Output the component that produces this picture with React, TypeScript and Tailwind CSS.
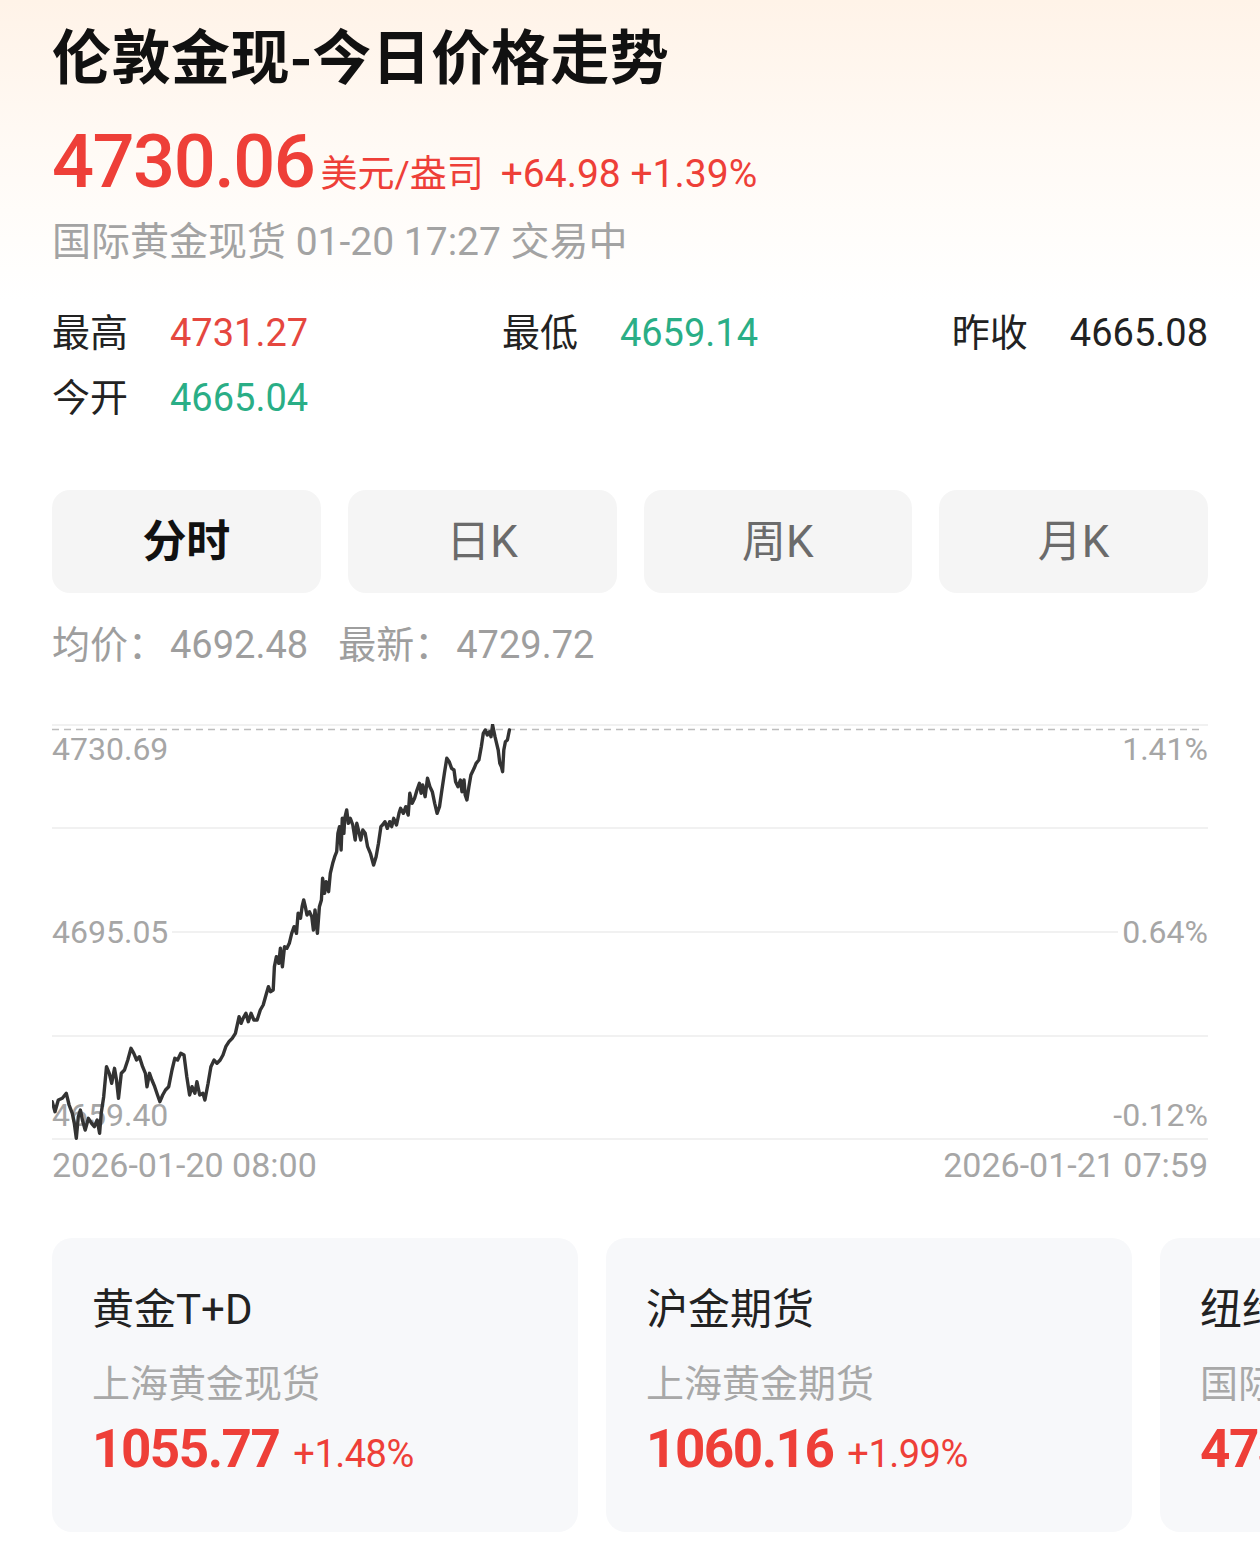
import React from "react";

const RAW: [number, number][] = [
  [130,1205],[137,1235],[145,1200],[155,1195],[165,1180],[172,1215],[180,1240],[185,1270],[190,1315],[195,1250],
  [200,1230],[205,1260],[212,1290],[220,1255],[228,1270],[235,1280],[242,1260],[248,1300],[252,1240],[258,1190],
  [265,1100],[272,1120],[278,1150],[285,1105],[290,1140],[295,1195],[302,1120],[310,1110],[318,1080],[326,1045],
  [333,1060],[340,1080],[347,1070],[355,1100],[362,1120],[366,1160],[372,1120],[378,1140],[385,1160],[392,1185],
  [398,1205],[405,1185],[412,1170],[420,1160],[428,1110],[435,1075],[442,1080],[450,1060],[458,1065],[465,1130],
  [472,1185],[478,1160],[485,1180],[490,1145],[497,1185],[505,1180],[510,1200],[518,1150],[525,1100],[533,1080],
  [540,1090],[548,1080],[555,1065],[562,1040],[570,1025],[578,1015],[586,1000],[595,950],[600,970],[605,955],
  [612,940],[618,965],[625,940],[632,960],[640,960],[648,930],[655,915],[662,885],[668,860],[673,875],
  [680,870],[683,800],[688,770],[694,790],[698,745],[703,800],[708,740],[714,745],[720,730],[726,700],
  [732,680],[738,700],[742,640],[748,655],[752,620],[756,600],[760,620],[764,645],[770,635],[776,650],
  [780,690],[784,630],[790,700],[795,620],[800,600],[803,535],[808,580],[812,545],[818,575],[822,520],
  [828,490],[833,470],[838,455],[841,400],[845,380],[849,450],[852,355],[856,400],[858,355],[863,330],
  [867,370],[872,355],[878,375],[884,420],[888,370],[892,390],[898,420],[903,390],[909,400],[915,440],
  [922,460],[930,495],[936,470],[942,430],[948,380],[952,375],[958,365],[964,385],[970,365],[975,380],
  [980,355],[987,375],[993,340],[997,325],[1004,340],[1010,320],[1016,345],[1020,280],[1026,310],[1032,295],
  [1038,270],[1044,250],[1048,280],[1052,255],[1058,290],[1064,235],[1070,260],[1076,275],[1082,310],[1088,340],
  [1094,320],[1100,270],[1106,220],[1112,175],[1118,185],[1124,205],[1130,210],[1134,245],[1140,260],[1146,240],
  [1150,275],[1155,240],[1158,285],[1162,300],[1167,260],[1172,225],[1180,205],[1185,190],[1192,180],[1198,140],
  [1203,100],[1208,90],[1213,105],[1218,95],[1222,110],[1226,75],[1232,110],[1236,130],[1240,150],[1244,190],
  [1248,200],[1251,215],[1254,150],[1258,125],[1263,120],[1268,90],
];

const pathD = RAW.map(([zx, zy], i) => {
  const x = zx / 2.489 - 52;
  const y = zy / 3 - 24;
  return (i ? "L" : "M") + x.toFixed(1) + " " + y.toFixed(1);
}).join(" ");

const FONT = "font-['Roboto','Noto_Sans_CJK_SC',sans-serif]";

function Stat({ label, value, color }: { label: string; value: string; color: string }) {
  return (
    <div className="flex items-center h-[50px] leading-[50px]">
      <span className="text-[38px] text-[#222]">{label}</span>
      <span className={`ml-[42px] text-[38px] ${color}`}>{value}</span>
    </div>
  );
}

function Tab({ label, active }: { label: string; active?: boolean }) {
  return (
    <div className="flex-1 h-[103px] rounded-[18px] bg-[#f5f5f5] flex items-center justify-center">
      <span className={active ? "text-[44px] font-bold text-[#111]" : "text-[44px] text-[#6b6b6b]"}>{label}</span>
    </div>
  );
}

function Card({ title, sub, value, pct }: { title: string; sub: string; value: string; pct: string }) {
  return (
    <div className="shrink-0 w-[526px] h-[294px] rounded-[20px] bg-[#f7f8fa] pl-[40px] pt-[45px]">
      <div className="text-[42px] leading-[54px] text-[#222] whitespace-nowrap">{title}</div>
      <div className="mt-[21px] text-[38px] leading-[52px] text-[#a8a8a8] whitespace-nowrap">{sub}</div>
      <div className="mt-[8px] flex items-baseline whitespace-nowrap leading-[62px]">
        <span className="text-[53px] font-bold text-[#ee3f38] tracking-[-1.5px]">{value}</span>
        <span className="ml-[14px] text-[38px] text-[#ee3f38] tracking-[-0.5px]">{pct}</span>
      </div>
    </div>
  );
}

export default function App() {
  return (
    <div className={`w-[1260px] h-[1566px] overflow-hidden bg-white ${FONT}`}>
      <div className="bg-gradient-to-b from-[#fff3e8] via-[#fffaf5] to-white px-[52px] pt-[19px] pb-[36px]">
        <div className="text-[59px] leading-[70px] font-bold text-[#111] font-['Noto_Sans_CJK_SC',sans-serif] whitespace-nowrap tracking-[0.5px]">
          伦敦金现-今日价格走势
        </div>
        <div className="mt-[33px] h-[80px] flex items-baseline whitespace-nowrap text-[#ee3f38]">
          <span className="text-[74px] leading-[80px] font-medium tracking-[-1.5px]">4730.06</span>
          <span className="ml-[6px] text-[37px]">美元/盎司</span>
          <span className="ml-[17px] text-[39px]">+64.98 +1.39%</span>
        </div>
        <div className="mt-[18px] h-[44px] text-[39px] leading-[44px] text-[#a3a3a3] whitespace-nowrap">
          国际黄金现货 01-20 17:27 交易中
        </div>
      </div>

      <div className="px-[52px]">
        <div className="grid grid-cols-3 mt-[8px]">
          <div className="justify-self-start"><Stat label="最高" value="4731.27" color="text-[#e5473f]" /></div>
          <div className="justify-self-center"><Stat label="最低" value="4659.14" color="text-[#2aae86]" /></div>
          <div className="justify-self-end"><Stat label="昨收" value="4665.08" color="text-[#222]" /></div>
        </div>
        <div className="mt-[15px]">
          <Stat label="今开" value="4665.04" color="text-[#2aae86]" />
        </div>

        <div className="mt-[67px] flex gap-[27px]">
          <Tab label="分时" active />
          <Tab label="日K" />
          <Tab label="周K" />
          <Tab label="月K" />
        </div>

        <div className="mt-[29px] h-[46px] leading-[46px] text-[38px] text-[#9e9e9e] whitespace-nowrap flex">
          <span>均价：</span>
          <span className="ml-[4px]">4692.48</span>
          <span className="ml-[30px]">最新：</span>
          <span className="ml-[4px]">4729.72</span>
        </div>

        <div className="relative mt-[56px] h-[416px]">
          <svg className="absolute inset-0" width="1156" height="416" viewBox="0 0 1156 416">
            {[1, 104, 208, 312, 415].map((y) => (
              <line key={y} x1="0" x2="1156" y1={y} y2={y} stroke="#f1f1f1" strokeWidth="2" />
            ))}
          </svg>
          <div className="absolute left-0 top-[7px] text-[32px] leading-[36px] text-[#a6a6a6]">4730.69</div>
          <div className="absolute left-0 top-[190px] text-[32px] leading-[36px] text-[#a6a6a6] bg-white pr-[4px]">4695.05</div>
          <div className="absolute left-0 top-[373px] text-[32px] leading-[36px] text-[#a6a6a6]">4659.40</div>
          <div className="absolute right-0 top-[7px] text-[32px] leading-[36px] text-[#a6a6a6]">1.41%</div>
          <div className="absolute right-0 top-[190px] text-[32px] leading-[36px] text-[#a6a6a6] bg-white pl-[4px]">0.64%</div>
          <div className="absolute right-0 top-[373px] text-[32px] leading-[36px] text-[#a6a6a6]">-0.12%</div>
          <svg className="absolute inset-0" width="1156" height="416" viewBox="0 0 1156 416">
            <line x1="0" x2="1150" y1="5.5" y2="5.5" stroke="#bdbdbd" strokeWidth="1.5" strokeDasharray="7 5" />
            <path d={pathD} fill="none" stroke="#333333" strokeWidth="3.4" strokeLinejoin="round" strokeLinecap="round" />
          </svg>
        </div>

        <div className="mt-[5px] h-[40px] leading-[40px] flex justify-between text-[34px] text-[#a6a6a6] whitespace-nowrap">
          <span>2026-01-20 08:00</span>
          <span>2026-01-21 07:59</span>
        </div>
      </div>

      <div className="mt-[53px] pl-[52px] flex gap-[28px] overflow-hidden">
        <Card title="黄金T+D" sub="上海黄金现货" value="1055.77" pct="+1.48%" />
        <Card title="沪金期货" sub="上海黄金期货" value="1060.16" pct="+1.99%" />
        <Card title="纽约金" sub="国际黄金期货" value="4736.20" pct="+1.42%" />
      </div>
    </div>
  );
}
